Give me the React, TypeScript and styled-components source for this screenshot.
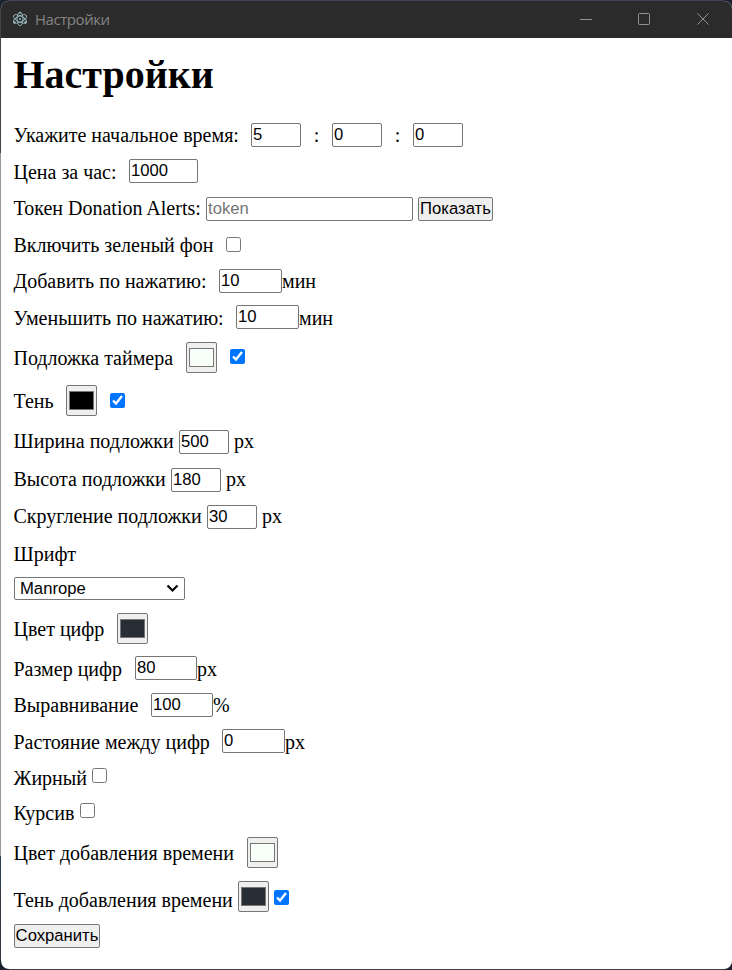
import React from "react";
import styled, { createGlobalStyle } from "styled-components";

const GlobalStyle = createGlobalStyle`
  *, *::before { box-sizing: border-box; }
  body { margin: 0; background: #1c2230; overflow: hidden; }
`;

const Desktop = styled.div`
  width: 732px;
  height: 970px;
  padding: 1px 0 1px 1px;
  background:
    linear-gradient(#3d3f46, #3d3f46) 9px 969px / 715px 1px no-repeat,
    linear-gradient(#3d4452, #3d4452) 8px 0 / 716px 1px no-repeat,
    linear-gradient(#42434c 0 145px, #98989a 145px 848px, #2f4254 848px 882px, #363843 882px) 0 8px / 1px 952px no-repeat,
    #1c2230;
`;

const Window = styled.div`
  height: 968px;
  display: flex;
  flex-direction: column;
  background: #fff;
  border-radius: 8px;
  overflow: hidden;
`;

const TitleBar = styled.header`
  height: 37px;
  flex: none;
  display: flex;
  align-items: center;
  padding: 0 0 2px 11px;
  background: #2b2b2b;
  color: #858585;
`;

const Title = styled.span`
  flex: 1;
  margin-left: 7px;
  font: 15px/20px "Open Sans", "Noto Sans", sans-serif;
  letter-spacing: -0.45px;
`;

const WindowButton = styled.button<{ $w?: number }>`
  width: ${(p) => p.$w ?? 58}px;
  height: 35px;
  padding: 0;
  border: 0;
  display: grid;
  place-items: center;
  background: transparent;
  color: #929292;
`;

const Content = styled.main`
  padding: 14px 0 0 13px;
  font: 20px/24px "Liberation Serif", serif;
  color: #000;
`;

const Heading = styled.h1`
  height: 64px;
  margin: 0 0 0 -0.5px;
  font-size: 40px;
  line-height: 46px;
  font-weight: 700;
`;

const Row = styled.div<{ $h: number }>`
  height: ${(p) => p.$h}px;
  display: flex;
  align-items: flex-start;
  white-space: pre;
`;

const Label = styled.label<{ $w?: number }>`
  flex: none;
  width: ${(p) => (p.$w ? `${p.$w}px` : "auto")};
  margin-top: 7px;
  text-indent: -0.5px;
`;

const Unit = styled.span<{ $gap?: number }>`
  margin: 7px 0 0 ${(p) => p.$gap ?? 0}px;
`;

const Colon = styled.span`
  width: 31px;
  margin-top: 7px;
  text-align: center;
`;

const Field = styled.input<{ $w: number; $top: number }>`
  flex: none;
  width: ${(p) => p.$w}px;
  height: 24px;
  margin: ${(p) => p.$top}px 0 0;
  padding: 0 1px;
  border: 1px solid #767676;
  border-radius: 2px;
  outline: 0;
  background: #fff;
  color: #000;
  font: 16.67px/21px "Liberation Sans", sans-serif;
  &::placeholder { color: #757575; }
`;

const Button = styled.button<{ $top?: number; $left?: number; $w: number }>`
  flex: none;
  width: ${(p) => p.$w}px;
  height: 24px;
  margin: ${(p) => p.$top ?? 0}px 0 0 ${(p) => p.$left ?? 0}px;
  padding: 0;
  border: 1px solid #767676;
  border-radius: 2px;
  background: #efefef;
  color: #000;
  font: 16.67px/20px "Liberation Sans", sans-serif;
  white-space: nowrap;
`;

const Check = styled.input.attrs({ type: "checkbox" })<{ $top: number; $left?: number }>`
  flex: none;
  width: 15px;
  height: 15px;
  margin: ${(p) => p.$top}px 0 0 ${(p) => p.$left ?? 0}px;
  accent-color: #0075ff;
`;

const ColorWell = styled.button<{ $top: number; $color: string }>`
  flex: none;
  width: 31px;
  height: 31px;
  margin: ${(p) => p.$top}px 0 0;
  padding: 5px 2px;
  border: 1px solid #767676;
  border-radius: 2px;
  background: #efefef;
  &::before {
    content: "";
    display: block;
    height: 19px;
    width: 25px;
    border: 1px solid #777;
    background: ${(p) => p.$color};
  }
`;

const SelectBox = styled.button`
  display: flex;
  align-items: center;
  justify-content: space-between;
  width: 171px;
  height: 23px;
  margin-bottom: 10px;
  padding: 0 5px 0 5px;
  border: 1px solid #767676;
  border-radius: 2px;
  background: #fff;
  color: #000;
  font: 16.67px/20px "Liberation Sans", sans-serif;
`;

export default function App() {
  return (
    <Desktop>
      <GlobalStyle />
      <Window>
        <TitleBar>
          <svg width="16" height="16" viewBox="0 0 16 16" fill="none" stroke="#9bb9c4" strokeWidth=".9">
            <ellipse cx="8" cy="8" rx="7" ry="2.900" transform="rotate(27 8 8)" />
            <ellipse cx="8" cy="8" rx="7" ry="2.900" transform="rotate(-27 8 8)" />
            <ellipse cx="8" cy="8" rx="6.800" ry="3" transform="rotate(90 8 8)" />
            <g fill="#9bb9c4" stroke="none">
              <circle cx="8" cy="8" r="1" />
              <circle cx="2.500" cy="11.500" r="1.200" />
              <circle cx="13.500" cy="11.500" r="1.200" />
              <circle cx="8.200" cy="1.700" r="1" />
            </g>
          </svg>
          <Title>Настройки</Title>
          <WindowButton aria-label="Свернуть">
            <svg width="12" height="12" stroke="currentColor"><path d="M0 6.500h12" /></svg>
          </WindowButton>
          <WindowButton aria-label="Развернуть">
            <svg width="12" height="12" fill="none" stroke="currentColor"><rect x=".5" y=".5" width="11" height="11" rx="1" /></svg>
          </WindowButton>
          <WindowButton aria-label="Закрыть" $w={59}>
            <svg width="12" height="12" stroke="currentColor"><path d="M.3.3 11.700 11.700M11.700.3.3 11.700" /></svg>
          </WindowButton>
        </TitleBar>
        <Content>
          <Heading>Настройки</Heading>
          <Row $h={37}>
            <Label $w={237}>Укажите начальное время:</Label>
            <Field $w={50} $top={7} defaultValue="5" />
            <Colon>:</Colon>
            <Field $w={50} $top={7} defaultValue="0" />
            <Colon>:</Colon>
            <Field $w={50} $top={7} defaultValue="0" />
          </Row>
          <Row $h={36}>
            <Label $w={115}>Цена за час:</Label>
            <Field $w={69} $top={6} defaultValue="1000" />
          </Row>
          <Row $h={37}>
            <Label $w={192}>Токен Donation Alerts:</Label>
            <Field $w={207} $top={8} placeholder="token" />
            <Button $top={8} $left={5} $w={75}>Показать</Button>
          </Row>
          <Row $h={36}>
            <Label $w={212}>Включить зеленый фон</Label>
            <Check $top={11} />
          </Row>
          <Row $h={37}>
            <Label $w={205}>Добавить по нажатию:</Label>
            <Field $w={63} $top={7} defaultValue="10" />
            <Unit>мин</Unit>
          </Row>
          <Row $h={40}>
            <Label $w={222}>Уменьшить по нажатию:</Label>
            <Field $w={63} $top={6} defaultValue="10" />
            <Unit>мин</Unit>
          </Row>
          <Row $h={43}>
            <Label $w={172}>Подложка таймера</Label>
            <ColorWell $top={3} $color="#f8fff8" />
            <Check $top={10} $left={13} defaultChecked />
          </Row>
          <Row $h={40}>
            <Label $w={52}>Тень</Label>
            <ColorWell $top={3} $color="#000" />
            <Check $top={11} $left={13} defaultChecked />
          </Row>
          <Row $h={38}>
            <Label $w={165}>Ширина подложки</Label>
            <Field $w={50} $top={8} defaultValue="500" />
            <Unit $gap={5}>px</Unit>
          </Row>
          <Row $h={37}>
            <Label $w={157}>Высота подложки</Label>
            <Field $w={50} $top={8} defaultValue="180" />
            <Unit $gap={5}>px</Unit>
          </Row>
          <Row $h={38}>
            <Label $w={193}>Скругление подложки</Label>
            <Field $w={50} $top={8} defaultValue="30" />
            <Unit $gap={5}>px</Unit>
          </Row>
          <Row $h={42}>
            <Label>Шрифт</Label>
          </Row>
          <SelectBox>
            Manrope
            <svg width="13" height="9" fill="none" stroke="#000" strokeWidth="2.200"><path d="m1.500 1.500 5 5 5-5" /></svg>
          </SelectBox>
          <Row $h={40}>
            <Label $w={103}>Цвет цифр</Label>
            <ColorWell $top={3} $color="#272e36" />
          </Row>
          <Row $h={36}>
            <Label $w={121}>Размер цифр</Label>
            <Field $w={62} $top={6} defaultValue="80" />
            <Unit>px</Unit>
          </Row>
          <Row $h={37}>
            <Label $w={137}>Выравнивание</Label>
            <Field $w={62} $top={7} defaultValue="100" />
            <Unit>%</Unit>
          </Row>
          <Row $h={36}>
            <Label $w={208}>Растояние между цифр</Label>
            <Field $w={63} $top={6} defaultValue="0" />
            <Unit>px</Unit>
          </Row>
          <Row $h={35}>
            <Label $w={78}>Жирный</Label>
            <Check $top={9} />
          </Row>
          <Row $h={40}>
            <Label $w={66}>Курсив</Label>
            <Check $top={9} />
          </Row>
          <Row $h={47}>
            <Label $w={233}>Цвет добавления времени</Label>
            <ColorWell $top={3} $color="#f8fff8" />
          </Row>
          <Row $h={41}>
            <Label $w={224}>Тень добавления времени</Label>
            <ColorWell $top={0} $color="#272e36" />
            <Check $top={9} $left={5} defaultChecked />
          </Row>
          <Button $w={86}>Сохранить</Button>
        </Content>
      </Window>
    </Desktop>
  );
}
